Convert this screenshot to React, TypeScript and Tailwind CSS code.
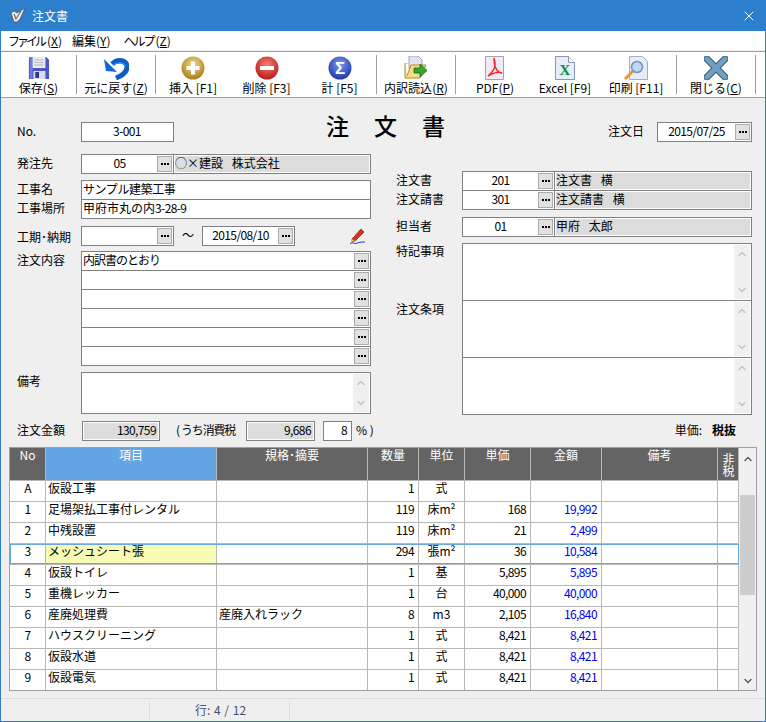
import { ChevronDown, ChevronUp, X } from 'lucide-react'
import type { ReactNode } from 'react'

const tools = [
  { label: '保存', key: 'S', icon: <SaveIcon />, width: 'w-[75px]', sep: true },
  { label: '元に戻す', key: 'Z', icon: <UndoIcon />, width: 'w-[78px]', sep: true },
  { label: '挿入 [F1]', icon: <CircleIcon id="gold" from="#f3dc8c" to="#a87c1c" mark="plus" />, width: 'w-[74px]' },
  { label: '削除 [F3]', icon: <CircleIcon id="red" from="#f77c70" to="#b81c1c" mark="minus" />, width: 'w-[73px]' },
  { label: '計 [F5]', icon: <CircleIcon id="blue" from="#7c9cf0" to="#2036a8" mark="sigma" />, width: 'w-[73px]', sep: true },
  { label: '内訳読込', key: 'R', icon: <FolderIcon />, width: 'w-[78px]', sep: true },
  { label: 'PDF', key: 'P', icon: <PdfIcon />, width: 'w-[78px]' },
  { label: 'Excel [F9]', icon: <ExcelIcon />, width: 'w-[62px]' },
  { label: '印刷 [F11]', icon: <PreviewIcon />, width: 'w-[80px]', sep: true },
  { label: '閉じる', key: 'C', icon: <CloseIcon />, width: 'w-[78px]', sep: true },
]

const columns = 'grid grid-cols-[36px_171px_151px_51px_46px_66px_71px_116px_21px]'

const rows = [
  ['A', '仮設工事', '', '1', '式', '', ''],
  ['1', '足場架払工事付レンタル', '', '119', '床m²', '168', '19,992'],
  ['2', '中残設置', '', '119', '床m²', '21', '2,499'],
  ['3', 'メッシュシート張', '', '294', '張m²', '36', '10,584'],
  ['4', '仮設トイレ', '', '1', '基', '5,895', '5,895'],
  ['5', '重機レッカー', '', '1', '台', '40,000', '40,000'],
  ['6', '産廃処理費', '産廃入れラック', '8', 'm3', '2,105', '16,840'],
  ['7', 'ハウスクリーニング', '', '1', '式', '8,421', '8,421'],
  ['8', '仮設水道', '', '1', '式', '8,421', '8,421'],
  ['9', '仮設電気', '', '1', '式', '8,421', '8,421'],
]

function SaveIcon() {
  return (
    <svg width="22" height="24" viewBox="0 0 24 24" preserveAspectRatio="none">
      <path d="M2 1h18l3 3v19H1V2z" fill="#4b57c4" />
      <path d="M2 1h3v22H2z" fill="#6f7be0" />
      <rect x="5" y="1" width="14" height="11" fill="#e9e9f0" />
      <path d="M7 4h10M7 6.500h10M7 9h10" stroke="#b4b4c4" />
      <rect x="6" y="15" width="13" height="8" fill="#dcdcec" />
      <rect x="8" y="16" width="4" height="6" fill="#2c3490" />
    </svg>
  )
}

function UndoIcon() {
  return (
    <svg width="26" height="24" viewBox="0 0 26 24">
      <path d="M9 8C15 2 24 4 24 11c0 6-6 9-11 11" fill="none" stroke="#0f5cc8" strokeWidth="5" />
      <path d="M10 9.500C15 5 22 7 22 11" fill="none" stroke="#3d8cec" strokeWidth="1.500" />
      <path d="M1 3l2 12 11 1z" fill="#1368d8" />
    </svg>
  )
}

function CircleIcon({ id, from, to, mark }: { id: string; from: string; to: string; mark: string }) {
  return (
    <svg width="24" height="24" viewBox="0 0 24 24">
      <defs>
        <radialGradient id={id} cx="50%" cy="35%" r="65%">
          <stop offset="0%" stopColor={from} />
          <stop offset="100%" stopColor={to} />
        </radialGradient>
      </defs>
      <circle cx="12" cy="12" r="11.500" fill={`url(#${id})`} />
      {mark === 'plus' && <path d="M12 5.500v13M5.500 12h13" stroke="#fff" strokeWidth="4" />}
      {mark === 'minus' && <path d="M5 12h14" stroke="#fff" strokeWidth="4" />}
      {mark === 'sigma' && (
        <text x="12" y="18" textAnchor="middle" fontSize="17" fontWeight="700" fill="#fff" fontFamily="Liberation Sans, sans-serif">
          Σ
        </text>
      )}
    </svg>
  )
}

function FolderIcon() {
  return (
    <svg width="24" height="24" viewBox="0 0 24 24">
      <path d="M5 0h9l4 4v9H5z" fill="#dfe4f4" stroke="#8a90b8" strokeWidth="0.800" />
      <path d="M1 7h4v14h12l4-12H7" fill="#f2c75c" />
      <path d="M1 7v15h15l6-13H7L3 20" fill="#f8dc88" stroke="#b88a20" />
      <path d="M10 12h6V8l7 6.500-7 6.500v-4h-6z" fill="#32a832" stroke="#186818" strokeWidth="0.800" />
    </svg>
  )
}

function PdfIcon() {
  return (
    <svg width="20" height="24" viewBox="0 0 20 24">
      <path d="M.5.500h18v23H.5z" fill="#f1e9f6" stroke="#a8a0b0" />
      <path d="M9 2c2 7 2 11-6 18 3-1 8-6 14-3-3 0-8-3-8-15z" fill="none" stroke="#ef2a2a" strokeWidth="1.400" />
    </svg>
  )
}

function ExcelIcon() {
  return (
    <svg width="20" height="24" viewBox="0 0 20 24">
      <path d="M.5.500h13l6 6v17H.5z" fill="#e6eef8" stroke="#8a94b4" />
      <path d="M13.500.500v6h6" fill="#fff" stroke="#8a94b4" />
      <text x="10" y="19" textAnchor="middle" fontSize="15" fontWeight="700" fill="#0f8a3c" fontFamily="Liberation Serif, serif">
        X
      </text>
    </svg>
  )
}

function PreviewIcon() {
  return (
    <svg width="24" height="24" viewBox="0 0 24 24">
      <path d="M5.500.500h13l5 5v18h-18z" fill="#e6ecf8" stroke="#a4acc8" />
      <path d="M1 23l8-8" stroke="#e89a30" strokeWidth="3" />
      <circle cx="13" cy="11" r="5.500" fill="#bcd8f4" stroke="#7c90b0" strokeWidth="1.500" />
    </svg>
  )
}

function CloseIcon() {
  return (
    <svg width="24" height="24" viewBox="0 0 24 24">
      <path d="M3 3l18 18M21 3L3 21" stroke="#3c5c74" strokeWidth="7" strokeLinecap="round" />
      <path d="M3 3l18 18M21 3L3 21" stroke="#6ea0c4" strokeWidth="5" strokeLinecap="round" />
    </svg>
  )
}

function AppIcon() {
  return (
    <svg width="16" height="15" viewBox="0 0 16 15">
      <path d="M1 5l3-2 3 2 8-5-5 11-3 3H4z" fill="#ececec" stroke="#555" strokeWidth="0.800" />
      <path d="M4 6l2 5 5-8" fill="none" stroke="#6a6a6a" strokeWidth="1.200" />
    </svg>
  )
}

function PencilIcon() {
  return (
    <svg width="18" height="18" viewBox="0 0 18 18">
      <path d="M3 12L12 2l3 3-9 9-3 1z" fill="#d83020" stroke="#7c1810" strokeWidth="0.700" />
      <path d="M3 12l-1 3 4-1z" fill="#e8c040" />
      <path d="M1 17c3-3 4 1 7-1 3-1 5-1 8-1" fill="none" stroke="#2040b0" />
    </svg>
  )
}

function Dots() {
  return (
    <span className="flex h-4 w-[15px] shrink-0 items-center justify-center gap-px border border-[#adadad] bg-[#e1e1e1]">
      <span className="h-[2px] w-[2px] bg-black" />
      <span className="h-[2px] w-[2px] bg-black" />
      <span className="h-[2px] w-[2px] bg-black" />
    </span>
  )
}

function Num({ children }: { children: ReactNode }) {
  return <span className="tracking-[-0.6px]">{children}</span>
}

function Field({ children, className = '', button }: { children?: ReactNode; className?: string; button?: boolean }) {
  return (
    <div className={`flex h-5 items-center border border-[#808080] bg-white pr-px ${className}`}>
      <div className="min-w-0 flex-1 whitespace-nowrap px-px pb-[2px]">{children}</div>
      {button && <Dots />}
    </div>
  )
}

function CodeField({ code, name, width, className = '' }: { code: string; name: string; width: string; className?: string }) {
  return (
    <div className={`flex h-5 border border-[#808080] bg-white ${className}`}>
      <div className={`flex items-center border-r border-[#808080] pr-px ${width}`}>
        <div className="flex-1 pb-[2px] text-center"><Num>{code}</Num></div>
        <Dots />
      </div>
      <div className="flex flex-1 p-px">
        <div className="flex-1 whitespace-nowrap bg-[#dcdcdc] leading-[13px] [word-spacing:6px]">{name}</div>
      </div>
    </div>
  )
}

function Memo({ className = '' }: { className?: string }) {
  return (
    <div className={`flex justify-end border border-[#808080] bg-white p-px ${className}`}>
      <div className="flex w-[16px] flex-col items-center justify-between bg-[#f0f0f0] py-[3px] text-[#c4c4c4]">
        <ChevronUp size={12} strokeWidth={3} />
        <ChevronDown size={12} strokeWidth={3} />
      </div>
    </div>
  )
}

function Label({ children, className = 'w-[64px]' }: { children?: ReactNode; className?: string }) {
  return <div className={`shrink-0 whitespace-nowrap leading-[17px] ${className}`}>{children}</div>
}

export default function App() {
  return (
    <div className="flex h-[722px] w-[766px] flex-col overflow-hidden border-x border-b border-[#2b7fcc] bg-[#efefef] font-['Noto_Sans_CJK_JP',sans-serif] text-[12px] leading-4 text-black">
      <div className="flex h-[31px] shrink-0 items-center bg-[#2b7fcc] pl-[9px] pr-[8px] text-white">
        <AppIcon />
        <span className="ml-[6px]">注文書</span>
        <X size={16} strokeWidth={1.500} className="ml-auto" />
      </div>

      <div className="flex h-[19px] shrink-0 items-center bg-white pl-[7px]">
        <span><span className="tracking-[-3px]">ファイル</span><span className="ml-[3px]">(<u>X</u>)</span></span>
        <span className="ml-[10px]">編集(<u>Y</u>)</span>
        <span className="ml-[13px]"><span className="tracking-[-2px]">ヘルプ</span><span className="ml-[2px]">(<u>Z</u>)</span></span>
      </div>
      <div className="h-px shrink-0 bg-[#efefef]" />

      <div className="flex h-[47px] shrink-0 items-center border-y border-[#a0a0a0] bg-white">
        {tools.map((t) => (
          <div key={t.label} className="flex items-center">
            <div className={`flex flex-col items-center ${t.width}`}>
              <div className="flex h-[26px] items-center">{t.icon}</div>
              <div className="whitespace-nowrap leading-[14px]">
                {t.label}
                {t.key && <>(<u>{t.key}</u>)</>}
              </div>
            </div>
            {t.sep && <div className="h-[39px] w-px bg-[#a0a0a0]" />}
          </div>
        ))}
      </div>

      <div className="mt-[15px] flex h-[29px] shrink-0 items-end pl-4 pr-[13px]">
        <div className="w-[64px] pb-[3px]">No.</div>
        <Field className="w-[93px] text-center"><Num>3-001</Num></Field>
        <div className="ml-[152px] self-start whitespace-nowrap text-[23px] font-medium leading-[24px] tracking-[25px]">注文書</div>
        <div className="ml-auto w-[49px] pb-[3px]">注文日</div>
        <Field button className="w-[95px] text-center"><Num>2015/07/25</Num></Field>
      </div>

      <div className="flex shrink-0 pl-4">
        <div className="w-[354px] pt-[12px]">
          <div className="flex">
            <Label>発注先</Label>
            <CodeField code="05" name="◯×建設 株式会社" width="w-[92px]" className="w-[290px]" />
          </div>
          <div className="mt-[6px] flex">
            <Label>工事名</Label>
            <Field className="w-[290px]"><span className="tracking-[-0.4px]">サンプル建築工事</span></Field>
          </div>
          <div className="-mt-px flex">
            <Label>工事場所</Label>
            <Field className="w-[290px]">甲府市丸の内<Num>3-28-9</Num></Field>
          </div>
          <div className="mt-[7px] flex items-center">
            <Label>工期･納期</Label>
            <Field button className="w-[93px]" />
            <div className="w-[28px] pb-[2px] text-center">〜</div>
            <Field button className="w-[93px] text-center"><Num>2015/08/10</Num></Field>
            <div className="ml-auto mr-[4px]"><PencilIcon /></div>
          </div>
          <div className="mt-[5px] flex">
            <Label>注文内容</Label>
            <div className="w-[290px]">
              <Field button><span className="tracking-[-1px]">内訳書のとおり</span></Field>
              {[0, 1, 2, 3, 4].map((i) => (
                <Field key={i} button className="-mt-px" />
              ))}
            </div>
          </div>
          <div className="mt-[6px] flex">
            <Label>備考</Label>
            <Memo className="h-[42px] w-[290px]" />
          </div>
        </div>

        <div className="ml-[25px] w-[356px] pt-[29px]">
          <div className="flex">
            <Label className="w-[66px]">注文書</Label>
            <CodeField code="201" name="注文書 横" width="w-[92px]" className="w-[290px]" />
          </div>
          <div className="-mt-px flex">
            <Label className="w-[66px]">注文請書</Label>
            <CodeField code="301" name="注文請書 横" width="w-[92px]" className="w-[290px]" />
          </div>
          <div className="mt-[7px] flex">
            <Label className="w-[66px]">担当者</Label>
            <CodeField code="01" name="甲府 太郎" width="w-[92px]" className="w-[290px]" />
          </div>
          <div className="mt-[6px] flex">
            <Label className="-mt-px w-[66px]">特記事項</Label>
            <Memo className="h-[58px] w-[290px]" />
          </div>
          <div className="-mt-px flex">
            <Label className="w-[66px]">注文条項</Label>
            <Memo className="h-[58px] w-[290px]" />
          </div>
          <div className="-mt-px flex">
            <Label className="w-[66px]" />
            <Memo className="h-[58px] w-[290px]" />
          </div>
        </div>
      </div>

      <div className="mt-[6px] flex h-5 shrink-0 items-center pl-4 pr-[29px]">
        <div className="w-[65px] pb-[3px]">注文金額</div>
        <div className="h-5 w-[78px] border border-[#808080] bg-white p-px">
          <div className="h-full bg-[#dcdcdc] pr-[2px] text-right leading-[13px]"><Num>130,759</Num></div>
        </div>
        <div className="ml-[16px] w-[70px] whitespace-nowrap pb-[3px]">(<span className="ml-px tracking-[-1.2px]">うち消費税</span></div>
        <div className="h-5 w-[69px] border border-[#808080] bg-white p-px">
          <div className="h-full bg-[#dcdcdc] pr-[2px] text-right leading-[13px]"><Num>9,686</Num></div>
        </div>
        <div className="ml-[8px] h-5 w-[29px] border border-[#808080] bg-white pr-1 text-right leading-[15px]"><Num>8</Num></div>
        <div className="ml-[4px] whitespace-nowrap pb-[3px]">% )</div>
        <div className="ml-auto whitespace-nowrap pb-[3px]"><span className="mr-[10px]">単価:</span><b>税抜</b></div>
      </div>

      <div className="ml-2 mt-[6px] flex w-[748px] shrink-0 border border-[#a0a0a0] bg-white">
        <div className="w-[729px]">
          <div className={`${columns} h-[33px] border-b border-[#b8b8b8] bg-[#646464] text-center leading-[13px] text-white`}>
            <div className="border-r border-[#b8b8b8]">No</div>
            <div className="border-r border-[#b8b8b8] bg-[#64a5e6]">項目</div>
            <div className="border-r border-[#b8b8b8]">規格･摘要</div>
            <div className="border-r border-[#b8b8b8]">数量</div>
            <div className="border-r border-[#b8b8b8]">単位</div>
            <div className="border-r border-[#b8b8b8]">単価</div>
            <div className="border-r border-[#b8b8b8]">金額</div>
            <div className="border-r border-[#b8b8b8]">備考</div>
            <div className="flex justify-center border-r border-[#b8b8b8] pt-[2px]">
              <span className="leading-[20px] [writing-mode:vertical-rl]">非税</span>
            </div>
          </div>
          {rows.map((r, i) => (
            <div key={r[0]} className="h-[21px] border-b border-[#b8b8b8] last:h-[20px] last:border-b-0">
              <div className={`${columns} h-[20px] leading-[13px] ${i === 3 ? 'outline -outline-offset-1 outline-[#6aa8e0]' : ''}`}>
                <div className="border-r border-[#b8b8b8] text-center"><Num>{r[0]}</Num></div>
                <div className={`whitespace-nowrap border-r border-[#b8b8b8] px-[2px] ${i === 3 ? 'bg-[#f7fbb4]' : ''}`}>{r[1]}</div>
                <div className="whitespace-nowrap border-r border-[#b8b8b8] px-[2px]">{r[2]}</div>
                <div className="border-r border-[#b8b8b8] pr-1 text-right"><Num>{r[3]}</Num></div>
                <div className="border-r border-[#b8b8b8] text-center">{r[4]}</div>
                <div className="border-r border-[#b8b8b8] pr-1 text-right"><Num>{r[5]}</Num></div>
                <div className="border-r border-[#b8b8b8] pr-1 text-right text-[#0000ee]"><Num>{r[6]}</Num></div>
                <div className="border-r border-[#b8b8b8]" />
                <div className="border-r border-[#b8b8b8]" />
              </div>
            </div>
          ))}
        </div>
        <div className="flex w-[17px] flex-col items-center bg-[#f0f0f0] text-[#606060]">
          <div className="flex h-[47px] w-full items-start justify-center pt-[5px]"><ChevronUp size={12} strokeWidth={3} /></div>
          <div className="h-[100px] w-[15px] bg-[#cdcdcd]" />
          <div className="mt-auto pb-[3px]"><ChevronDown size={12} strokeWidth={3} /></div>
        </div>
      </div>

      <div className="mt-auto flex h-[23px] shrink-0 items-center border-t border-[#dcdcdc] text-[#44546a]">
        <div className="h-[17px] w-[149px] border-r border-[#dcdcdc]" />
        <div className="h-[17px] w-[140px] border-r border-[#dcdcdc] pl-[2px] text-center leading-[15px] [word-spacing:1px]">行: 4 / 12</div>
      </div>
    </div>
  )
}
